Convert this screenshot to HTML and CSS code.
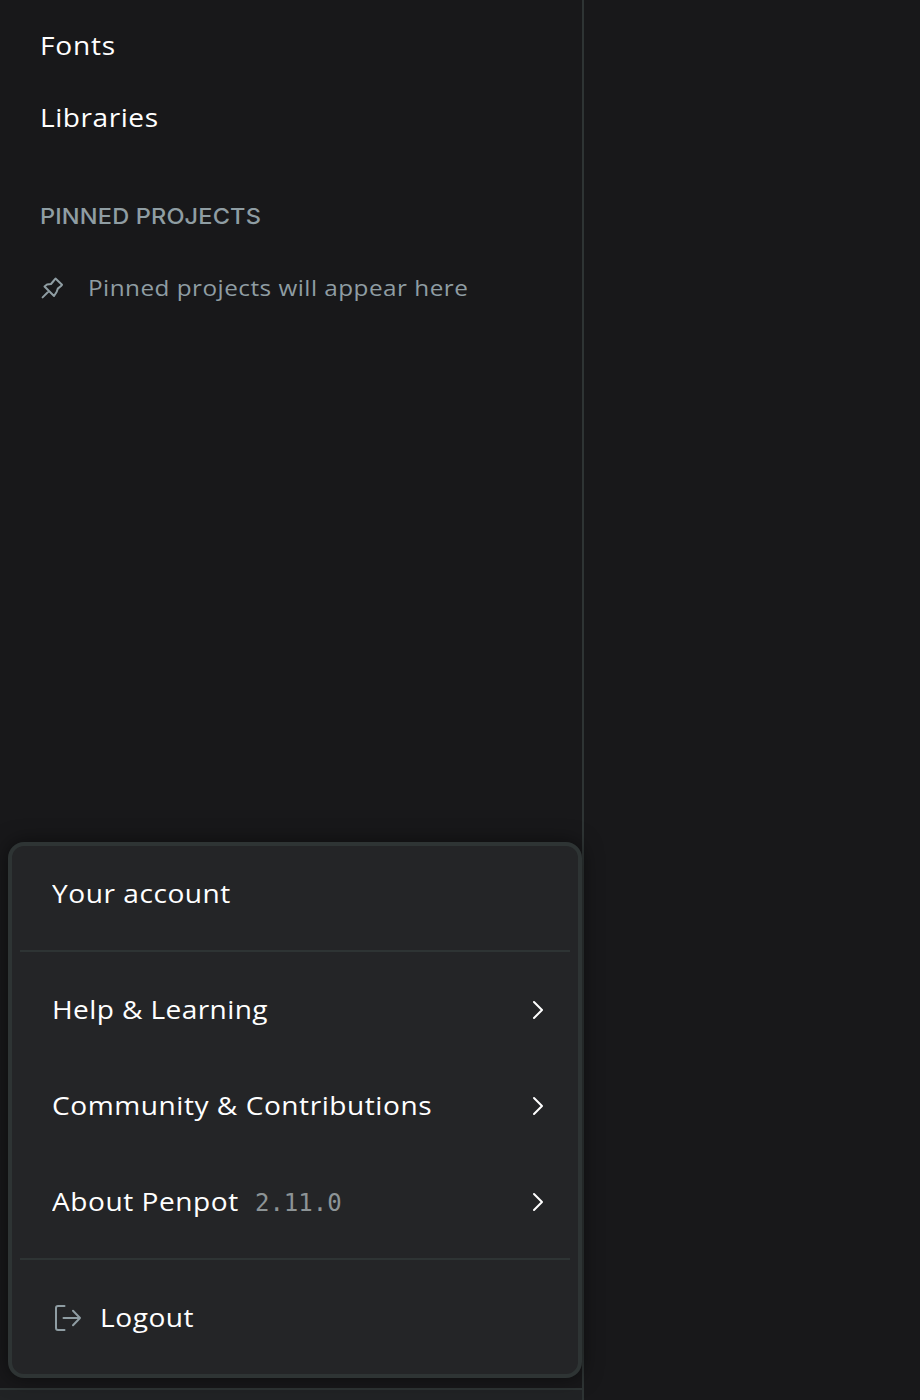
FILE: index.html
```html
<!DOCTYPE html>
<html lang="en">
<head>
<meta charset="utf-8">
<title>Penpot</title>
<link rel="stylesheet" href="styles.css">
</head>
<body>
<div class="dashboard">
  <aside class="sidebar">
    <nav class="nav">
      <a class="nav-item"><span class="label t-fonts">Fonts</span></a>
      <a class="nav-item"><span class="label">Libraries</span></a>
    </nav>
    <h2 class="section-title">PINNED PROJECTS</h2>
    <div class="empty">
      <svg class="pin" viewBox="0 0 32 32"><path d="M6.600 25.400l6.400-6.400M19.500 6.500l6.500 6.300-1 1.200-3.200 2.600-1.200 3.400-2.600 4L8.500 14.500l2.500-2 4-.5 2.500-3z"/></svg>
      <span class="t-empty">Pinned projects will appear here</span>
    </div>
    <div class="profile"></div>
    <div class="menu">
      <div class="menu-item"><span class="label">Your account</span></div>
      <hr class="separator">
      <div class="menu-item"><span class="label t-help">Help &amp; Learning</span><svg class="arrow" viewBox="0 0 32 32"><path d="M12 8l8 8-8 8"/></svg></div>
      <div class="menu-item"><span class="label">Community &amp; Contributions</span><svg class="arrow" viewBox="0 0 32 32"><path d="M12 8l8 8-8 8"/></svg></div>
      <div class="menu-item"><span class="label">About Penpot</span><span class="version">2.11.0</span><svg class="arrow" viewBox="0 0 32 32"><path d="M12 8l8 8-8 8"/></svg></div>
      <hr class="separator">
      <div class="menu-item"><svg class="exit" viewBox="0 0 32 32"><path d="M12.500 4H6a2 2 0 0 0-2 2v20a2 2 0 0 0 2 2h6.500M11.500 16h16.500M21 8.800L28 16l-7 7.200"/></svg><span class="label">Logout</span></div>
    </div>
  </aside>
  <main class="content"></main>
</div>
</body>
</html>
```

FILE: styles.css
```css
* { box-sizing: border-box; }
body {
  margin: 0;
  background: #18181a;
  color: #fff;
  font: 400 26px/36px "Open Sans", sans-serif;
  overflow: hidden;
}
.dashboard { display: flex; height: 1400px; }
.sidebar {
  position: relative;
  display: flex;
  flex-direction: column;
  width: 584px;
  border-right: 2px solid #2e3434;
}
.content { flex: 1; }
.nav { padding-top: 10px; }
.nav-item {
  display: flex;
  align-items: center;
  height: 72px;
  padding-left: 40px;
}
.section-title {
  margin: 44px 0 0 40px;
  width: 300px;
  height: 36px;
  font: 500 21.8px/36px Inter, sans-serif;
  letter-spacing: .15px;
  transform: scaleX(1.08);
  transform-origin: left;
  color: #8f9da3;
}
.empty {
  display: flex;
  align-items: center;
  height: 72px;
  margin-top: 18px;
  padding-left: 36px;
  font-size: 22.5px;
  color: #8f9da3;
}
svg { fill: none; stroke-linecap: round; stroke-linejoin: round; flex: none; }
.pin { width: 32px; height: 32px; margin-right: 20px; stroke: #8f9da3; stroke-width: 2; }
.profile {
  height: 12px;
  margin-top: auto;
  border-top: 2px solid #2e3434;
  background: #212325;
}
.menu {
  position: absolute;
  left: 8px;
  top: 842px;
  width: 574px;
  height: 536px;
  border: 4px solid #2e3434;
  border-radius: 16px;
  background: #242527;
  box-shadow: 0 0 20px rgba(0, 0, 0, .5);
}
.menu-item {
  display: flex;
  align-items: center;
  height: 96px;
  padding: 0 24px 0 40px;
}
.separator {
  height: 2px;
  margin: 8px 8px 10px;
  border: 0;
  background: #2e3434;
}
.arrow { width: 32px; height: 32px; margin-left: auto; stroke: #fff; stroke-width: 2; }
.exit { width: 32px; height: 32px; margin-right: 16px; stroke: #8f9da3; stroke-width: 2; }
.version {
  margin-left: 30px;
  padding-top: 2px;
  font: 24px/36px "DejaVu Sans Mono", monospace;
  color: #8d9496;
}
.label, .t-empty {
  letter-spacing: .5px;
  white-space: nowrap;
  transform: scaleX(1.08);
  transform-origin: left;
}
.label { padding-bottom: 2px; }
.t-fonts { letter-spacing: .75px; }
.t-help { letter-spacing: .36px; }
.t-empty { letter-spacing: .44px; }
```
